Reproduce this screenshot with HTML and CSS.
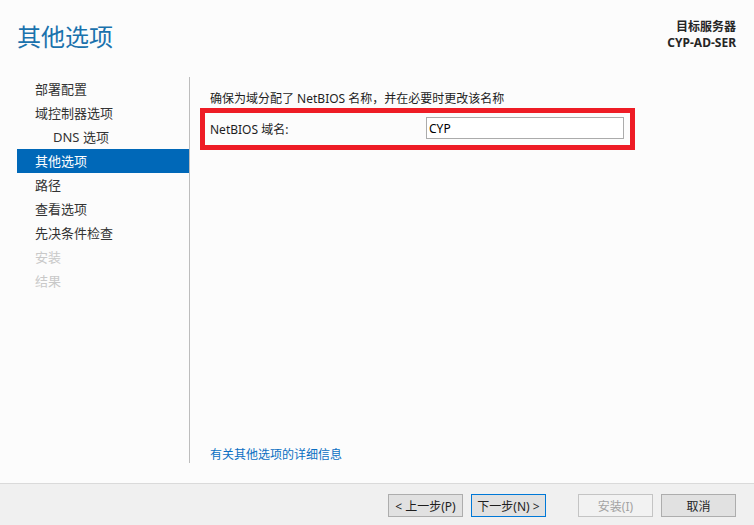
FILE: index.html
```html
<!DOCTYPE html>
<html lang="zh-CN">
  <head>
    <meta charset="UTF-8" />
    <meta name="viewport" content="width=device-width, initial-scale=1.0" />
    <title>其他选项</title>
    <link rel="stylesheet" href="styles.css">
  </head>
  <body>
    <div class="wizard">
      <div class="wizard-header">
        <h1>其他选项</h1>
        <div class="target">
          <div>目标服务器</div>
          <div>CYP-AD-SER</div>
        </div>
      </div>

      <div class="wizard-main">
        <ul class="steps">
          <li>部署配置</li>
          <li>域控制器选项</li>
          <li class="sub">DNS 选项</li>
          <li class="active">其他选项</li>
          <li>路径</li>
          <li>查看选项</li>
          <li>先决条件检查</li>
          <li class="disabled">安装</li>
          <li class="disabled">结果</li>
        </ul>

        <div class="page">
          <p class="intro">确保为域分配了 NetBIOS 名称，并在必要时更改该名称</p>
          <div class="field-box">
            <label class="field-label" for="netbios">NetBIOS 域名:</label>
            <input class="field-input" id="netbios" type="text" value="CYP" />
          </div>
          <a href="#" class="more-link">有关其他选项的详细信息</a>
        </div>
      </div>

      <div class="wizard-footer">
        <button class="btn">&lt; 上一步(P)</button>
        <button class="btn btn-default">下一步(N) &gt;</button>
        <button class="btn btn-install" disabled>安装(I)</button>
        <button class="btn">取消</button>
      </div>
    </div>
  </body>
</html>
```

FILE: styles.css
```css
body {
  margin: 0;
  font-family: "Noto Sans", "Noto Sans CJK SC", sans-serif;
  font-size: 12px;
  color: #1e1e1e;
  background-color: #fcfcfc;
}

.wizard {
  width: 754px;
  height: 525px;
  display: flex;
  flex-direction: column;
}

/* top title strip */
.wizard-header {
  height: 77px;
  display: flex;
  justify-content: space-between;
  padding: 0 18px 0 17px;
  box-sizing: border-box;
}

.wizard-header h1 {
  margin: 0;
  padding-top: 21px;
  font-size: 24px;
  line-height: 32px;
  font-weight: normal;
  color: #1a72ad;
}

.target {
  padding-top: 19px;
  text-align: right;
  font-weight: bold;
  line-height: 16px;
  color: #262626;
}

/* left step list + page */
.wizard-main {
  flex: 1;
  display: flex;
  padding-bottom: 20px;
}

.steps {
  list-style: none;
  margin: 0;
  padding: 0 0 0 17px;
  width: 172px;
  border-right: 1px solid #bdbdbd;
  font-size: 13px;
}

.steps li {
  height: 24px;
  line-height: 24px;
  padding-left: 18px;
  color: #333;
}

.steps li.sub {
  padding-left: 36px;
}

.steps li.active {
  background-color: #0068b8;
  color: #fff;
}

.steps li.disabled {
  color: #c9c9c9;
}

.page {
  flex: 1;
  display: flex;
  flex-direction: column;
  padding: 14px 0 0 10px;
}

.intro {
  margin: 0 0 1px 10px;
  line-height: 16px;
}

.field-box {
  width: 420px;
  height: 32px;
  border: 5px solid #ee1c25;
  display: flex;
  align-items: center;
  padding-left: 5px;
}

.field-label {
  width: 216px;
}

.field-input {
  width: 198px;
  height: 22px;
  box-sizing: border-box;
  border: 1px solid #ababab;
  background-color: #fff;
  padding: 0 2px;
  font-family: inherit;
  font-size: 12px;
  color: #000;
  margin-top: -2px;
}

.more-link {
  margin-top: auto;
  margin-left: 10px;
  line-height: 16px;
  color: #0a6fc2;
  text-decoration: none;
}

/* bottom button bar */
.wizard-footer {
  height: 42px;
  box-sizing: border-box;
  border-top: 1px solid #dadada;
  background-color: #f0f0f0;
  display: flex;
  justify-content: flex-end;
  padding: 10px 18px 0 0;
}

.btn {
  width: 75px;
  height: 23px;
  margin-left: 8px;
  padding: 0;
  border: 1px solid #adadad;
  background-color: #e1e1e1;
  font-family: inherit;
  font-size: 12px;
  color: #1e1e1e;
}

.btn-default {
  border-color: #0078d7;
}

.btn-install {
  margin-left: 32px;
  border-color: #c4c4c4;
  background-color: #f2f2f2;
  color: #a3a3a3;
}
```
